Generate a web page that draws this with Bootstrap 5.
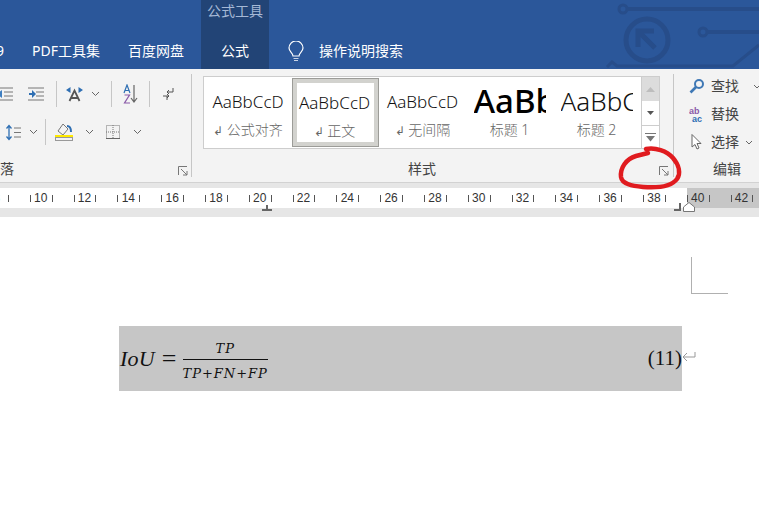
<!DOCTYPE html>
<html lang="zh">
<head>
<meta charset="utf-8">
<title>Word</title>
<link href="https://cdn.jsdelivr.net/npm/bootstrap@5.3.0/dist/css/bootstrap.min.css" rel="stylesheet">
<style>
html,body{width:759px;height:519px;overflow:hidden;background:#fff}
body{position:relative;font-family:"Noto Sans","Noto Sans CJK SC",sans-serif;font-size:14px;line-height:1;color:#444}
.topbar{height:69px;background:#2b579a;color:#fff;position:relative}
.circuit{position:absolute;left:600px;top:0}
.tabs{height:69px;position:relative;margin-left:-4px}
.tabitem{margin-top:44px;white-space:nowrap}
.tab-a{width:8px;margin-right:28px}
.tab-b{margin-right:28px}
.tab-c{margin-right:17px}
.tab-active{width:68px;height:69px;background:#224476;text-align:center}
.tab-title{padding-top:4px;height:44px;color:#a5b8d5}
.bulb{margin:41px 15px 0 19px}
.ribbon{height:114px;background:#f3f3f3;border-bottom:1px solid #d2d2d2}
.grp-left{width:192px;border-right:1px solid #c6c6c6;height:103px;margin-top:5px;position:relative;flex:none}
.tool-row{height:38px;padding-top:2px}
.tool-row svg{flex:none;display:block}
.vsep{width:1px;height:26px;background:#c6c6c6;flex:none}
.grp-label{position:absolute;bottom:1px;font-size:14px;color:#444;white-space:nowrap}
.launcher{position:absolute;right:3px;bottom:1px}
.grp-styles{width:482px;height:103px;margin-top:5px;border-right:1px solid #c6c6c6;position:relative;flex:none;padding:2px 0 0 11px}
.gallery{width:457px;height:73px;background:#fff;border:1px solid #cdcdcd}
.style-item{width:87px;height:71px;flex:none;text-align:center;overflow:hidden;padding-top:13px;white-space:nowrap}
.style-item.first{width:88px}
.style-item.sel{border:1px solid #9c9c98;box-shadow:inset 0 0 0 4px #d2d2ce;margin:1px 0;height:69px;padding:12px 2px 0 0}
.sample{font-size:17px;height:24px;line-height:24px;color:#111;font-weight:300}
.sample.h1b{font-size:33px;font-weight:500;color:#000;margin:-4px auto 0;width:72px;overflow:hidden;height:28px;line-height:30px;text-align:left}
.sample.h2b{font-size:26px;font-weight:300;color:#111;margin:0 auto;width:72px;overflow:hidden;height:24px;line-height:22px;text-align:left}
.style-name{font-size:14px;color:#666;margin-top:9px;font-weight:300}
.scroll-col{width:18px;margin-left:auto;border-left:1px solid #cdcdcd}
.scr{height:24px;display:flex;align-items:center;justify-content:center}
.scr-up{background:#dcdcdc}
.scr-low{border-top:1px solid #cdcdcd;height:23px}
.grp-right{flex:1 1 auto;height:103px;margin-top:3px;position:relative;padding:0 0 0 15px}
.find-row{height:28px;gap:6px;color:#444;white-space:nowrap}
.ruler-zone{height:34px;background:#e6e6e6;padding-top:5px;position:relative}
.ruler{height:20px;background:linear-gradient(to right,#fff 687px,#c6c6c6 687px);overflow:hidden}
.ruler-track{margin-left:-14px;width:900px}
.rcell{width:43.8px;height:20px;flex:none}
.rnum{width:21.9px;height:20px;flex:none;font:12px/20px "Liberation Sans",sans-serif;color:#333;text-align:center;background:linear-gradient(#555,#555) 0 7px/1px 7px no-repeat}
.rtick{width:21.9px;height:20px;flex:none;background:linear-gradient(#555,#555) 0 7px/1px 7px no-repeat}
.rmark{position:absolute}
.rmark-a{left:262px;top:18px}
.rmark-b{left:674px;top:19px}
.crop{margin:40px 0 0 691px;width:37px;height:37px;border-left:1px solid #b0b0b0;border-bottom:1px solid #b0b0b0}
.eq{margin:32px 0 0 119px;width:563px;height:65px;background:#c6c6c6;position:relative;color:#111}
.iou{font:italic 22px/1 "Liberation Serif",serif;margin-left:1px;letter-spacing:.2px}
.rel{font:26px/1 "Liberation Serif",serif;margin:0 6px 0 7px}
.frac{font:italic 13px/1 "DejaVu Serif",serif;letter-spacing:1px;text-align:center;margin-top:4px}
.frac-top{padding-bottom:4px;border-bottom:1px solid #111}
.frac-bot{padding-top:7px}
.eqnum{font:21px/1 "Liberation Serif",serif;margin-left:auto}
.para{position:absolute;left:563px;top:25px}
.ink{position:absolute;left:0;top:0;pointer-events:none}
</style>
</head>
<body>
<header class="topbar">
  <svg class="circuit" width="159" height="69" viewBox="600 0 159 69" fill="none" stroke="#274d8a" stroke-width="3">
    <circle cx="623" cy="9" r="4"/><path d="M627 9H759" stroke-width="4"/>
    <circle cx="647" cy="40" r="21" stroke-width="5"/>
    <path d="M655 48L640 33M638 47V31H654" stroke-width="5"/>
    <circle cx="703" cy="32" r="4"/><path d="M707 32H759" stroke-width="4"/>
    <path d="M607 67L612 62L617 66H733L759 45"/>
  </svg>
  <div class="tabs d-flex">
    <div class="tabitem tab-a">9</div>
    <div class="tabitem tab-b">PDF工具集</div>
    <div class="tabitem tab-c">百度网盘</div>
    <div class="tab-active"><div class="tab-title">公式工具</div><div>公式</div></div>
    <svg class="bulb" width="16" height="22" viewBox="0 0 16 22" fill="none" stroke="#fff" stroke-width="1.2"><path d="M5 15C5 12 1 10.500 1 7A7 7 0 0 1 15 7C15 10.500 11 12 11 15Z"/><path d="M5.500 17.500H10.500M6 19.500H10" stroke="#c9d4e6"/></svg>
    <div class="tabitem">操作说明搜索</div>
  </div>
</header>

<section class="ribbon d-flex">
  <div class="grp-left">
    <div class="tool-row d-flex align-items-center">
      <svg style="margin-left:-3px" width="16" height="14" viewBox="0 0 16 14"><path d="M0 1H16M7 5H16M7 9H16M0 13H16" stroke="#777"/><path d="M0 7L5 3V11Z" fill="#3f7fc1"/></svg>
      <svg style="margin-left:15px" width="16" height="14" viewBox="0 0 16 14"><path d="M0 1H16M8 5H16M8 9H16M0 13H16" stroke="#777"/><path d="M1 6H4V3L8 7L4 11V8H1Z" fill="#2f6fb3"/></svg>
      <div class="vsep" style="margin-left:12px"></div>
      <svg style="margin-left:9px" width="17" height="15" viewBox="0 0 17 15" fill="none"><path d="M3.500 14L8.500 3.500L13.500 14M5.500 11H11.500" stroke="#555" stroke-width="1.800"/><path d="M0 3L4.500 0V6ZM17 3L12.500 0V6Z" fill="#2f6fb3"/></svg>
      <svg style="margin-left:8px" width="9" height="6" viewBox="0 0 9 6" fill="none"><path d="M1 1L4.500 4.500L8 1" stroke="#666"/></svg>
      <div class="vsep" style="margin-left:11px"></div>
      <svg style="margin-left:11px" width="15" height="20" viewBox="0 0 15 20" fill="none"><path d="M11 1V17M8 14L11 18L14 14" stroke="#666" stroke-width="1.200"/><path d="M1 9L4 1L7 9M2 6.500H6" stroke="#2f6fb3" stroke-width="1.200"/><path d="M1.500 11H6.500L1.500 19H7" stroke="#8a5aa8" stroke-width="1.200"/></svg>
      <div class="vsep" style="margin-left:11px"></div>
      <svg style="margin-left:12px" width="12" height="14" viewBox="0 0 12 14" fill="none"><path d="M11 1V5H5M7 3L5 5L7 7M1 9H7M5 7L7 9L5 11M5 9V13" stroke="#555"/></svg>
    </div>
    <div class="tool-row d-flex align-items-center">
      <svg style="margin-left:6px" width="15" height="17" viewBox="0 0 15 17" fill="none"><path d="M3 2V15M0.500 4.500L3 1.500L5.500 4.500M0.500 12.500L3 15.500L5.500 12.500" stroke="#2f6fb3" stroke-width="1.300"/><path d="M8 4H15M8 8.500H15M8 13H15" stroke="#777"/></svg>
      <svg style="margin-left:8px" width="9" height="6" viewBox="0 0 9 6" fill="none"><path d="M1 1L4.500 4.500L8 1" stroke="#666"/></svg>
      <div class="vsep" style="margin-left:7px"></div>
      <svg style="margin-left:9px" width="19" height="18" viewBox="0 0 19 18" fill="none"><path d="M3 8L8 1L13 6L8 12Z" stroke="#777"/><path d="M12 3C15 3 16 5 16 9" stroke="#2f6fb3" stroke-width="2"/><rect x="0" y="12" width="18" height="2.500" fill="#ffea00"/><rect x=".5" y="14.500" width="17" height="3" stroke="#999"/></svg>
      <svg style="margin-left:11px" width="9" height="6" viewBox="0 0 9 6" fill="none"><path d="M1 1L4.500 4.500L8 1" stroke="#666"/></svg>
      <svg style="margin-left:12px" width="14" height="14" viewBox="0 0 14 14" fill="none"><rect x=".5" y=".5" width="13" height="13" stroke="#777" stroke-dasharray="1 1"/><path d="M7 0V14M0 7H14" stroke="#777" stroke-dasharray="1 1"/><path d="M0 13.500H14" stroke="#666"/></svg>
      <svg style="margin-left:13px" width="9" height="6" viewBox="0 0 9 6" fill="none"><path d="M1 1L4.500 4.500L8 1" stroke="#666"/></svg>
    </div>
    <div class="grp-label" style="left:0">落</div>
    <svg class="launcher" width="10" height="10" viewBox="0 0 10 10" fill="none"><path d="M.5 9V.5H9M3 3L9 9M5 9H9V5" stroke="#777"/></svg>
  </div>

  <div class="grp-styles">
    <div class="gallery d-flex">
      <div class="style-item first"><div class="sample">AaBbCcD</div><div class="style-name"><small>↲</small> 公式对齐</div></div>
      <div class="style-item sel"><div class="sample">AaBbCcD</div><div class="style-name"><small>↲</small> 正文</div></div>
      <div class="style-item"><div class="sample">AaBbCcD</div><div class="style-name"><small>↲</small> 无间隔</div></div>
      <div class="style-item"><div class="sample h1b">AaBbC</div><div class="style-name">标题 1</div></div>
      <div class="style-item"><div class="sample h2b">AaBbCcD</div><div class="style-name">标题 2</div></div>
      <div class="scroll-col">
        <div class="scr scr-up"><svg width="9" height="5" viewBox="0 0 9 5"><path d="M4.500 0L9 5H0Z" fill="#bdbdbd"/></svg></div>
        <div class="scr"><svg width="7" height="4" viewBox="0 0 7 4"><path d="M0 0H7L3.500 4Z" fill="#555"/></svg></div>
        <div class="scr scr-low"><svg width="11" height="9" viewBox="0 0 11 9"><path d="M0 .5H11" stroke="#777"/><path d="M1 3H10L5.500 8.500Z" fill="#777"/></svg></div>
      </div>
    </div>
    <div class="grp-label" style="left:216px">样式</div>
    <svg class="launcher" style="right:4px" width="10" height="10" viewBox="0 0 10 10" fill="none"><path d="M.5 9V.5H9M3 3L9 9M5 9H9V5" stroke="#777"/></svg>
  </div>

  <div class="grp-right">
    <div class="find-row d-flex align-items-center">
      <svg width="16" height="16" viewBox="0 0 16 16" fill="none"><circle cx="10" cy="6" r="4" stroke="#3f78b5" stroke-width="2"/><path d="M7 9L1.500 14.500" stroke="#3f78b5" stroke-width="2.600"/></svg>
      <span>查找</span>
      <svg class="ms-2" width="8" height="5" viewBox="0 0 8 5" fill="none"><path d="M1 1L4 4L7 1" stroke="#666"/></svg>
    </div>
    <div class="find-row d-flex align-items-center">
      <svg width="16" height="16" viewBox="0 0 16 16"><text x="0" y="7.500" font-family="Liberation Sans" font-size="9" font-weight="700" fill="#8a5aa8">ab</text><text x="3" y="15.500" font-family="Liberation Sans" font-size="9" font-weight="700" fill="#2f6fb3">ac</text></svg>
      <span>替换</span>
    </div>
    <div class="find-row d-flex align-items-center">
      <svg width="16" height="16" viewBox="0 0 16 16" fill="#fff"><path d="M3 0.500V13L6 10.500L8 15L10 14L8 9.500H12Z" stroke="#666"/></svg>
      <span>选择</span>
      <svg width="8" height="5" viewBox="0 0 8 5" fill="none"><path d="M1 1L4 4L7 1" stroke="#666"/></svg>
    </div>
    <div class="grp-label" style="left:39px;bottom:-1px">编辑</div>
  </div>
</section>

<section class="ruler-zone">
  <div class="ruler">
    <div class="ruler-track d-flex">
      <div class="rcell d-flex"><div class="rnum">8</div><div class="rtick"></div></div>
      <div class="rcell d-flex"><div class="rnum">10</div><div class="rtick"></div></div>
      <div class="rcell d-flex"><div class="rnum">12</div><div class="rtick"></div></div>
      <div class="rcell d-flex"><div class="rnum">14</div><div class="rtick"></div></div>
      <div class="rcell d-flex"><div class="rnum">16</div><div class="rtick"></div></div>
      <div class="rcell d-flex"><div class="rnum">18</div><div class="rtick"></div></div>
      <div class="rcell d-flex"><div class="rnum">20</div><div class="rtick"></div></div>
      <div class="rcell d-flex"><div class="rnum">22</div><div class="rtick"></div></div>
      <div class="rcell d-flex"><div class="rnum">24</div><div class="rtick"></div></div>
      <div class="rcell d-flex"><div class="rnum">26</div><div class="rtick"></div></div>
      <div class="rcell d-flex"><div class="rnum">28</div><div class="rtick"></div></div>
      <div class="rcell d-flex"><div class="rnum">30</div><div class="rtick"></div></div>
      <div class="rcell d-flex"><div class="rnum">32</div><div class="rtick"></div></div>
      <div class="rcell d-flex"><div class="rnum">34</div><div class="rtick"></div></div>
      <div class="rcell d-flex"><div class="rnum">36</div><div class="rtick"></div></div>
      <div class="rcell d-flex"><div class="rnum">38</div><div class="rtick"></div></div>
      <div class="rcell d-flex"><div class="rnum">40</div><div class="rtick"></div></div>
      <div class="rcell d-flex"><div class="rnum">42</div><div class="rtick"></div></div>
    </div>
  </div>
  <svg class="rmark rmark-a" width="10" height="10" viewBox="0 0 10 10"><path d="M0 8H10V10H0ZM4 4H6V8H4Z" fill="#666"/></svg>
  <svg class="rmark rmark-b" width="22" height="10" viewBox="0 0 22 10" fill="none"><path d="M7 1V9H0V7H5V1Z" fill="#666"/><path d="M9.500 9.500V5L15 .5L20.500 5V9.500Z" fill="#fff" stroke="#777"/></svg>
</section>

<main>
  <div class="crop"></div>
  <div class="eq d-flex align-items-center">
    <span class="iou">IoU</span><span class="rel">=</span>
    <div class="frac"><div class="frac-top">TP</div><div class="frac-bot">TP+FN+FP</div></div>
    <span class="eqnum">(11)</span>
    <svg class="para" width="14" height="12" viewBox="0 0 14 12" fill="none"><path d="M13 1V6H1M5 2L1 6L5 10" stroke="#999"/></svg>
  </div>
</main>

<svg class="ink" width="759" height="519" viewBox="0 0 759 519" fill="none"><path d="M646 149C655 147 667 151 673 158C679 165 681 173 677 179C671 187 656 188 643 187C632 186 622 184 621 177C620 168 626 159 636 156C640 155 644 154 648 153" stroke="#e01b1f" stroke-width="4.500" stroke-linecap="round"/></svg>
</body>
</html>
